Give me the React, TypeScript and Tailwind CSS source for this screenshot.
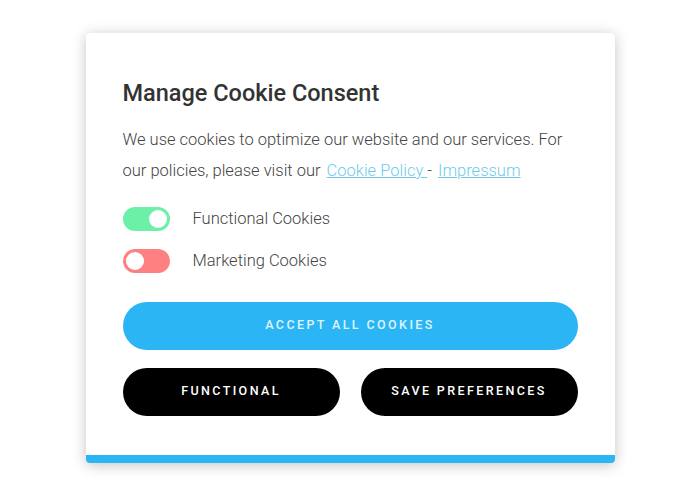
import { useState } from 'react';

function Toggle({ on, color }: { on: boolean; color: string }) {
  return (
    <span className={`flex h-[24px] w-[47px] items-center rounded-full px-[3px] ${color} ${on ? 'justify-end' : 'justify-start'}`}>
      <span className="h-[18px] w-[18px] rounded-full bg-white" />
    </span>
  );
}

export default function App() {
  const [functional] = useState(true);
  const [marketing] = useState(false);

  return (
    <div className="flex h-[501px] w-[700px] justify-center bg-white pt-[33px] font-['Roboto',sans-serif]">
      <div className="flex h-[430px] w-[529px] flex-col overflow-hidden rounded-[4px] bg-white shadow-[0_2px_14px_rgba(0,0,0,0.24)]">
        <div className="flex flex-1 flex-col px-[37px] pt-[46px]">
          <h2 className="text-[23.5px] font-medium leading-[28px] text-[#333]">Manage Cookie Consent</h2>
          <p className="mt-[17px] text-[16.5px] font-light leading-[31px] text-[#444]">
            We use cookies to optimize our website and our services. For our policies, please visit our{' '}
            <a className="ml-[2px] text-[#6fcbea] underline">Cookie Policy </a>
            <span>- </span>
            <a className="ml-[2px] text-[#6fcbea] underline">Impressum</a>
          </p>
          <div className="mt-[21px] flex flex-col gap-[17px]">
            <label className="flex items-center gap-[23px]">
              <Toggle on={functional} color="bg-[#6cf0a8]" />
              <span className="text-[16.5px] font-light text-[#444]">Functional Cookies</span>
            </label>
            <label className="flex items-center gap-[23px]">
              <Toggle on={marketing} color="bg-[#ff8080]" />
              <span className="text-[16.5px] font-light text-[#444]">Marketing Cookies</span>
            </label>
          </div>
          <button className="mt-[28px] h-[48px] w-full rounded-full bg-[#2cb5f4] text-[12.5px] font-medium uppercase tracking-[2.4px] text-[#dff4fd]">
            Accept all cookies
          </button>
          <div className="mt-[18px] grid grid-cols-2 gap-[21px]">
            <button className="h-[48px] rounded-full bg-black text-[12.5px] font-medium uppercase tracking-[2.4px] text-white">
              Functional
            </button>
            <button className="h-[48px] rounded-full bg-black text-[12.5px] font-medium uppercase tracking-[2.4px] text-white">
              Save preferences
            </button>
          </div>
        </div>
        <div className="h-[8px] bg-[#2cb5f4]" />
      </div>
    </div>
  );
}
